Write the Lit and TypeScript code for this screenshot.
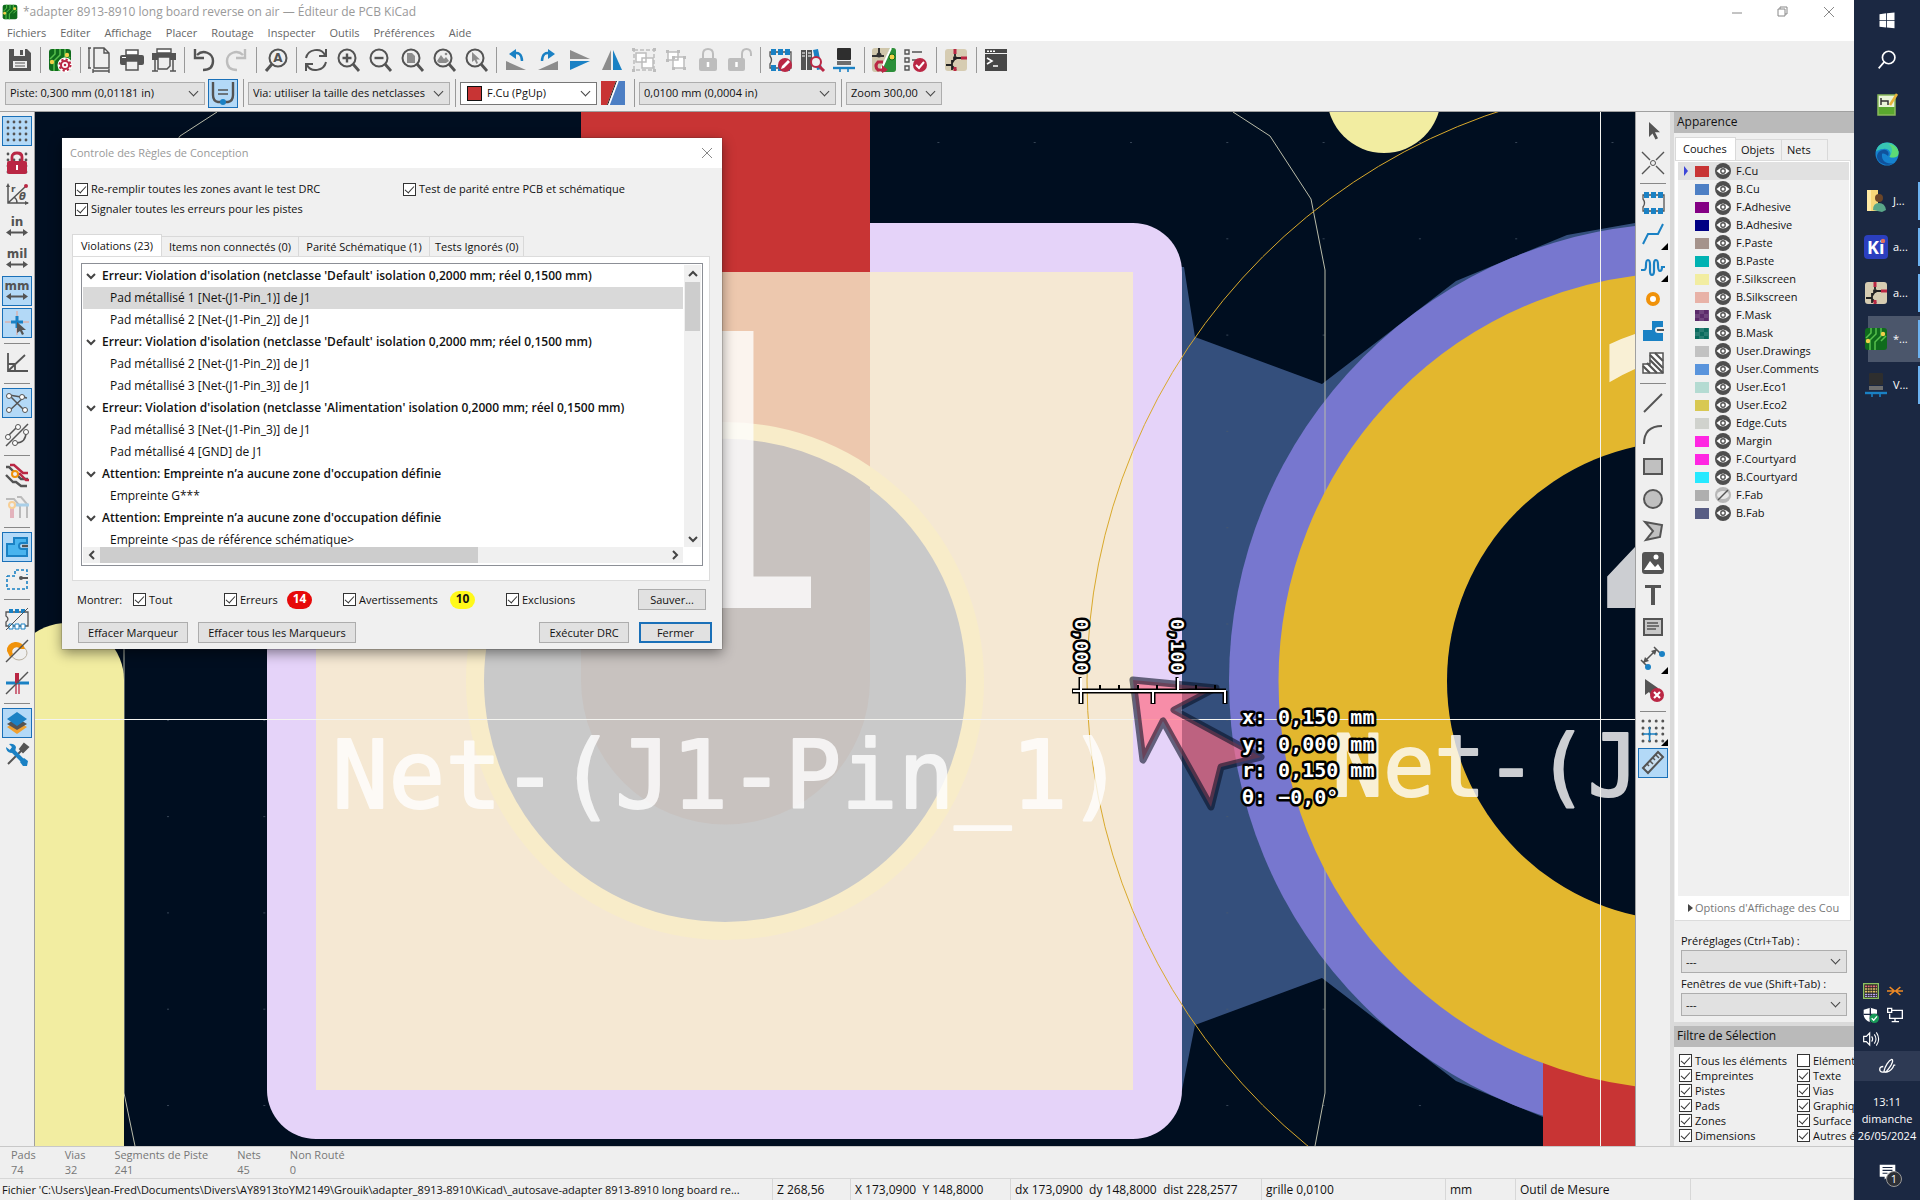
import { LitElement, html, svg, css, nothing } from "lit";
import { customElement, property } from "lit/decorators.js";

const G = "#545454";
const B = "#1a81c4";
const R = "#ba2744";
const L = "#bdbdbd";

const board = svg`<rect x="1" y="1" width="22" height="22" rx="3" fill="#0f6b1c"/><path d="M7 1v5l-5 5M12 1v6l-6 6v10M17 1v8l-6 6v8M22 9l-5 5" fill="none" stroke="#57c04c" stroke-width="1.500"/><circle cx="4" cy="14" r="2.200" fill="#f2d04a"/><circle cx="19" cy="7" r="2.200" fill="#f2d04a"/>`;
const sch = svg`<rect x="1" y="1" width="22" height="22" rx="3" fill="#d6ccb2"/><path d="M11 1v7M11 10h12M2 17h6M8 12v10M8 15l4-6M8 18l4 4" fill="none" stroke="#222" stroke-width="1.800"/><path d="M11 1v5M17 10h6M11 23v-4" stroke="${R}" stroke-width="3"/><circle cx="11" cy="10" r="2" fill="#222"/>`;
const glass = svg`<circle cx="11" cy="10" r="8.500" fill="none" stroke="${G}" stroke-width="2"/><path d="M17 16l6 7" stroke="${G}" stroke-width="2.800"/>`;
const arrow = svg`<path d="M8 3v15l3.500-3.500 3 6 2.500-1.200-3-6h5z" fill="${G}"/>`;
const pads = svg`<path d="M2 4h21v16H2v-4q3-4 0-8z" fill="none" stroke="${G}" stroke-width="1.300"/><path d="M3 1h5v6H3zM10 1h5v6h-5zM17 1h5v6h-5zM3 17h5v6H3zM10 17h5v6h-5zM17 17h5v6h-5z" fill="${B}"/>`;
const dots = (c: string) => svg`<path d="M3 3h18.100M3 9h18.100M3 15h18.100M3 21h18.100" stroke="${c}" stroke-width="2.800" stroke-linecap="round" stroke-dasharray="0 6"/>`;
const units = (t: string) => svg`<text x="12" y="11" text-anchor="middle" font-size="12" font-weight="700" fill="${G}" font-family="DejaVu Sans, sans-serif">${t}</text><path d="M4 17.500h16" stroke="${G}" stroke-width="2"/><path d="M1 17.500l5-3.500v7zM23 17.500l-5-3.500v7z" fill="${G}"/>`;

const icons: Record<string, unknown> = {
  save: svg`<path d="M1 1h18l4 4v18H1z" fill="${G}"/><path d="M6 1h11v7H6z" fill="#efefef"/><path d="M12 2h3v5h-3z" fill="${G}"/><path d="M5 13h14v7H5z" fill="#efefef"/><path d="M7 15h10M7 18h10" stroke="${G}"/>`,
  setup: svg`${board}<circle cx="17" cy="17" r="5.500" fill="none" stroke="#fff" stroke-width="4"/><circle cx="17" cy="17" r="4" fill="#fff" stroke="${R}" stroke-width="2"/><circle cx="17" cy="17" r="5.500" fill="none" stroke="${R}" stroke-width="2" stroke-dasharray="2.200 2.100"/><circle cx="17" cy="17" r="1.300" fill="${R}"/>`,
  page: svg`<path d="M6 0h10l5 5v15H6zM16 0v5h5M5 23h16M5 21v4M21 21v4M1 0v20M0 0h3M0 20h3" fill="none" stroke="${G}" stroke-width="1.400"/>`,
  print: svg`<path d="M6 2h12v5H6z" fill="#fff" stroke="${G}" stroke-width="1.500"/><rect x="0" y="7" width="24" height="10" rx="2" fill="${G}"/><path d="M6 13h12v9H6z" fill="#efefef" stroke="${G}" stroke-width="1.500"/><path d="M2 9.500h4" stroke="#fff"/>`,
  plot: svg`<path d="M5 1h14v4H5z" fill="#fff" stroke="${G}" stroke-width="1.400"/><path d="M0 5h24v7H0z" fill="${G}"/><path d="M6 9h12v9l-3 3H6z" fill="#efefef" stroke="${G}" stroke-width="1.500"/><path d="M3 12v11M21 12v11M0 23h6M18 23h6" fill="none" stroke="${G}" stroke-width="1.500"/>`,
  undo: svg`<path d="M5 7c6-6 16-2 16 6 0 6-4 9-10 9" fill="none" stroke="${G}" stroke-width="2.400"/><path d="M3 1v9h9" fill="none" stroke="${G}" stroke-width="2.400"/>`,
  redo: svg`<path d="M19 7C13 1 3 5 3 13c0 6 4 9 10 9M21 1v9h-9" fill="none" stroke="${L}" stroke-width="2.400"/>`,
  find: svg`<circle cx="14" cy="10" r="8.500" fill="none" stroke="${G}" stroke-width="2"/><path d="M8 16l-6 7" stroke="${G}" stroke-width="3"/><text x="14" y="14" font-size="12" font-weight="700" text-anchor="middle" fill="${G}" font-family="DejaVu Sans, sans-serif">A</text>`,
  refresh: svg`<path d="M2 10C4 1 17-1 21 7M22 1v7h-7M22 14c-2 9-15 11-19 3M2 23v-7h7" fill="none" stroke="${G}" stroke-width="2"/>`,
  zin: svg`${glass}<path d="M6.500 10h9M11 5.500v9" stroke="${G}" stroke-width="2.400"/>`,
  zout: svg`${glass}<path d="M6.500 10h9" stroke="${G}" stroke-width="2.400"/>`,
  zpage: svg`${glass}<path d="M7 5h5l3 3v7H7z" fill="#8d8d8d"/>`,
  zobj: svg`${glass}<path d="M5 13l4-6 3 4 2-2 3 4-3 2H7z" fill="#8d8d8d"/><circle cx="14" cy="6" r="1.300" fill="#8d8d8d"/>`,
  zsel: svg`${glass}<path d="M8 4v10l2.500-2 2 4 1.500-1-1.500-3.500H16z" fill="#8d8d8d"/>`,
  rccw: svg`<path d="M2 13v9h20z" fill="#8c8c8c"/><path d="M8 6c7-3 10 1 10 7" fill="none" stroke="${B}" stroke-width="2.400"/><path d="M12 1L5 6l7 5z" fill="${B}"/>`,
  rcw: svg`<path d="M22 13v9H2z" fill="#8c8c8c"/><path d="M16 6C9 3 6 7 6 13" fill="none" stroke="${B}" stroke-width="2.400"/><path d="M12 1l7 5-7 5z" fill="${B}"/>`,
  flipv: svg`<path d="M2 2l20 9H2z" fill="#8c8c8c"/><path d="M2 13h20L2 22z" fill="${B}"/>`,
  fliph: svg`<path d="M11 2v20H2z" fill="#8c8c8c"/><path d="M13 2v20h9z" fill="${B}"/>`,
  group: svg`<path d="M2 2h20v20H2z" fill="none" stroke="${L}" stroke-width="1.500" stroke-dasharray="4 2"/><path d="M4 5h10v9H4zM10 10h11v10H10z" fill="#fff" stroke="${L}" stroke-width="1.500"/><path d="M0 0h3v3H0zM21 0h3v3h-3zM0 21h3v3H0zM21 21h3v3h-3z" fill="${L}"/>`,
  ungroup: svg`<path d="M4 4h10v8H4zM9 9h11v11H9z" fill="#fff" stroke="${L}" stroke-width="1.500"/><path d="M2 2h3v3H2zM13 2h3v3h-3zM2 11h3v3H2zM8 8h3v3H8zM19 8h3v3h-3zM8 19h3v3H8zM19 19h3v3h-3z" fill="${L}"/>`,
  lock: svg`<rect x="3" y="10" width="18" height="13" rx="2" fill="${L}"/><path d="M7 10V6q0-5 5-5t5 5v4" fill="none" stroke="${L}" stroke-width="2"/><path d="M12 14v5" stroke="#fff" stroke-width="2.500"/>`,
  unlock: svg`<rect x="0" y="10" width="17" height="13" rx="2" fill="${L}"/><path d="M14 10V6q0-5 4.500-5T23 6v2" fill="none" stroke="${L}" stroke-width="2"/><path d="M8.500 14v5" stroke="#fff" stroke-width="2.500"/>`,
  fpedit: svg`${pads}<circle cx="17" cy="17" r="7" fill="${R}"/><path d="M13 21l1-3 6-6 2 2-6 6z" fill="#fff"/>`,
  libs: svg`<path d="M1 2h5v20H1zM7 2h5v20H7z" fill="${G}"/><path d="M2 5h3M8 5h3M2 8h3M8 8h3" stroke="#fff"/><path d="M13 2l5-1 4 20-5 1z" fill="${B}"/><circle cx="16" cy="14" r="5" fill="#efefef" stroke="${R}" stroke-width="2"/><path d="M19 18l5 5" stroke="${R}" stroke-width="3"/>`,
  v3d: svg`<rect x="5" y="0" width="14" height="12" rx="1" fill="#2e2e2e"/><rect x="5" y="13" width="14" height="4" fill="#6e6e6e"/><path d="M1 20h22" stroke="${B}" stroke-width="2.400"/><path d="M8 19v5M16 19v5" stroke="${B}" stroke-width="1.600"/>`,
  update: svg`<rect x="0" y="0" width="24" height="24" rx="3" fill="#cfc6ab"/><path d="M18 0h3q3 0 3 3v18q0 3-3 3H8z" fill="#2b8f3a"/><path d="M19 0L8 24" stroke="#fff" stroke-width="2"/><path d="M7 0v7M0 8h12" stroke="#333" stroke-width="2"/><circle cx="7" cy="7" r="2.500" fill="#333"/><circle cx="20" cy="9" r="3" fill="#f2d04a" stroke="#0f6b1c"/><path d="M11 14H6q-4 4 0 8h8" fill="none" stroke="${R}" stroke-width="3"/><path d="M10 17l6 5-6 3z" fill="${R}"/>`,
  drc: svg`<path d="M1 2h4v4H1zM1 10h4v4H1zM1 18h4v4H1zM8 4h10M8 12h6" fill="none" stroke="${G}" stroke-width="1.400"/><circle cx="16" cy="17" r="7" fill="${R}"/><path d="M12 17l3 3 5-6" fill="none" stroke="#fff" stroke-width="2"/>`,
  sch,
  console: svg`<path d="M1 1h22v22H1z" fill="#474747"/><path d="M1 5.500h22" stroke="#efefef"/><path d="M3 3.200h8" stroke="#fff" stroke-width="1.500" stroke-dasharray="2 1"/><path d="M3 10l5 3-5 3M9 18h5" fill="none" stroke="#fff" stroke-width="1.600"/>`,
  width: svg`<path d="M2 1v13q0 6 5 7h10q5-1 5-7V1" fill="none" stroke="${G}" stroke-width="2.400"/><path d="M7 9h10M7 13h10" stroke="${G}" stroke-width="1.500"/><circle cx="12" cy="21" r="3" fill="${B}"/>`,
  pair: svg`<path d="M0 0h15L6 24H0z" fill="#c83434"/><path d="M17 0h7v24H8z" fill="#4d7fc4"/><path d="M15.500 0L6.500 24" stroke="#222" stroke-width="1"/><path d="M17 0L8 24" stroke="#fff" stroke-width="1.500"/>`,
  grid: dots(G),
  gridlock: svg`${dots(G)}<rect x="2" y="10" width="20" height="13" rx="2" fill="${R}"/><path d="M7 10V6q0-4 5-4t5 4v4" fill="none" stroke="${R}" stroke-width="2.800"/><path d="M12 14v5" stroke="#fff" stroke-width="2"/>`,
  polar: svg`<path d="M3 2v18h20M3 20L20 4M9 14q3 2 3 6" fill="none" stroke="${G}" stroke-width="1.500"/><path d="M3 0l2 4H1zM24 20l-4-2v4z" fill="${G}"/><circle cx="21" cy="3" r="2" fill="${R}"/><text x="6" y="9" font-size="9" font-weight="700" fill="${G}" font-family="DejaVu Sans, sans-serif">r</text><text x="14" y="17" font-size="10" font-weight="700" font-style="italic" fill="${G}" font-family="DejaVu Sans, sans-serif">θ</text>`,
  inch: units("in"),
  mil: units("mil"),
  mm: units("mm"),
  cross: svg`<path d="M0 11h24M12 0v24" stroke="#e8a08c"/><path d="M6 11h12M12 5v12" stroke="${B}" stroke-width="3"/><path d="M12 11v11l3-2 2 4 2-1-2-4h4z" fill="${G}"/>`,
  angle: svg`<path d="M3 2v18h20M3 20L20 4M3 13h7v7" fill="none" stroke="${G}" stroke-width="1.800"/>`,
  rats: svg`<path d="M4 4l16 16M4 20L20 5M4 4l18 3" stroke="${G}" stroke-width="1.500"/><circle cx="4" cy="5" r="2.500" fill="#fff" stroke="${G}"/><circle cx="17" cy="6" r="2.500" fill="#fff" stroke="${G}"/><circle cx="4" cy="19" r="2.500" fill="#fff" stroke="${G}"/><circle cx="20" cy="19" r="2.500" fill="#fff" stroke="${G}"/>`,
  ratsc: svg`<path d="M1 23L23 1M3 13l9-9M11 20q10 0 10-11" fill="none" stroke="${G}" stroke-width="1.500"/><circle cx="3" cy="14" r="2.500" fill="#fff" stroke="${G}"/><circle cx="13" cy="4" r="2.500" fill="#fff" stroke="${G}"/><circle cx="10" cy="20" r="2.500" fill="#fff" stroke="${G}"/><circle cx="21" cy="9" r="2.500" fill="#fff" stroke="${G}"/>`,
  tracks: svg`<path d="M1 4h3l5 5M12 12l4 4h7" fill="none" stroke="${G}" stroke-width="2.400"/><path d="M5 2h4l9 8h5M12 11h3l6 6h3" fill="none" stroke="${R}" stroke-width="2.400"/><path d="M1 12l7 7h3l5 4h6" fill="none" stroke="${G}" stroke-width="2.400"/><circle cx="10" cy="11" r="3" fill="#efefef" stroke="#f0920a" stroke-width="2"/>`,
  tracksl: svg`<path d="M1 4h8l6 7v12M12 2h4l6 7v14" fill="none" stroke="#bbb" stroke-width="2"/><path d="M10 10h14" stroke="#a9cfe8" stroke-width="3"/><path d="M7 12v11" stroke="#e3b3bc" stroke-width="4"/><circle cx="7" cy="10" r="3" fill="#efefef" stroke="#f7cf96" stroke-width="2"/>`,
  zone: svg`<path d="M2 9h7V3h13v5h-5q-3 0-3 3t3 3h5v7H2z" fill="#49b4ee" stroke="${B}" stroke-width="2"/><path d="M17 11h6" stroke="${G}" stroke-width="2.400"/>`,
  zoneo: svg`<path d="M2 9h8V3h12v5M22 14v8H2V9" fill="none" stroke="${B}" stroke-width="1.600" stroke-dasharray="3 2"/><circle cx="16" cy="11" r="2" fill="${G}"/><path d="M17 11h6" stroke="${G}" stroke-width="2"/>`,
  fpo: svg`<path d="M3 5h20v14H1v-4q4-3 0-6V5z" fill="none" stroke="${G}" stroke-width="1.300"/><path d="M4 2h4v4H4zM10 2h4v4h-4zM16 2h4v4h-4z" fill="${B}"/><path d="M4 17h4v5H4zM10 17h4v5h-4zM16 17h4v5h-4z" fill="#fff" stroke="${B}"/><path d="M1 23L23 1" stroke="${G}"/>`,
  viao: svg`<ellipse cx="14" cy="14" rx="8" ry="7" fill="none" stroke="#b9b0a0"/><path d="M2 12a9 8 0 0 1 18-2h-5a4 4 0 0 0-7 5l-3 3z" fill="#f0920a"/><path d="M1 23L23 1" stroke="${G}" stroke-width="1.500"/>`,
  trko: svg`<path d="M1 12h23" stroke="${B}" stroke-width="3"/><path d="M12 2v10" stroke="${R}" stroke-width="4"/><path d="M11 13v10M14 13v10" stroke="${R}" stroke-width="1.300"/><path d="M1 23L23 1" stroke="${G}" stroke-width="1.500"/>`,
  layers: svg`<path d="M12 10l10 6-10 7-10-7z" fill="#f0a030"/><path d="M12 7l10 6-10 6-10-6z" fill="${G}"/><path d="M12 1l10 7-10 7L2 8z" fill="${B}"/>`,
  tools: svg`<path d="M3 21L18 6" stroke="${G}" stroke-width="2"/><path d="M15 6l4-5 4 3-5 5z" fill="${G}" stroke="${G}" stroke-width="2"/><path d="M6 6l13 13" stroke="${B}" stroke-width="4"/><path d="M1 4l4 3 2-3-3-3q5-1 7 3l-1 5-4 1q-5-1-5-6zM15 19l4-4 4 3-1 5h-4z" fill="${B}"/>`,
  arrow,
  hair: svg`<path d="M1 1l8 8M15 15l8 8M1 23l8-8M15 9l8-8" stroke="${G}" stroke-width="1.400"/><circle cx="12" cy="12" r="2.500" fill="none" stroke="${G}"/>`,
  fp: pads,
  route: svg`<path d="M2 21l5-10h10l5-10" fill="none" stroke="${B}" stroke-width="2"/>`,
  tune: svg`<path d="M0 15h3q2 0 2-5t2-5 2 5v6q0 4 2 4t2-4V9q0-4 2-4t2 5q0 6 2 6t2-4h3" fill="none" stroke="${B}" stroke-width="2.200"/>`,
  via: svg`<circle cx="12" cy="12" r="5" fill="#fff" stroke="#f0920a" stroke-width="4"/>`,
  zonef: svg`<path d="M2 11h9V2h11v6h-5a3 3 0 0 0 0 6h5v8H2z" fill="${B}"/><path d="M16 11h7" stroke="${G}" stroke-width="2"/>`,
  hatch: svg`<path d="M9 2h13v20H2V13h7z" fill="#fff" stroke="${G}" stroke-width="1.500"/><path d="M9 4l13 13M14 2l8 8M9 9l13 13M6 12l10 10M2 15l7 7" stroke="${G}" stroke-width="2.200"/>`,
  line: svg`<path d="M3 21L21 3" stroke="${G}" stroke-width="2"/>`,
  arc: svg`<path d="M3 21Q3 3 21 3" fill="none" stroke="${G}" stroke-width="2"/>`,
  rect: svg`<path d="M3 4h18v15H3z" fill="#c0c0c0" stroke="${G}" stroke-width="2"/>`,
  circ: svg`<circle cx="12" cy="12" r="9" fill="#c0c0c0" stroke="${G}" stroke-width="2"/>`,
  poly: svg`<path d="M4 3l17 3-2 12-14 3 7-9z" fill="#c0c0c0" stroke="${G}" stroke-width="2"/>`,
  image: svg`<rect x="1" y="1" width="22" height="22" rx="3" fill="${G}"/><path d="M3 19l6-9 5 6 3-3 4 6z" fill="#fff"/><circle cx="15" cy="6" r="2.500" fill="#fff"/>`,
  text: svg`<path d="M4 2h16v3h-6v17h-4V5H4z" fill="${G}"/>`,
  tbox: svg`<path d="M3 4h18v16H3z" fill="#c8c8c8" stroke="${G}" stroke-width="2"/><path d="M6 8h11M6 11h12M6 14h9" stroke="${G}" stroke-width="1.300"/>`,
  dim: svg`<path d="M3 15L15 3M0 13l6 6M13 0l7 7" stroke="${G}" stroke-width="1.500"/><path d="M2 16l2-6 4 4zM16 2l-6 2 4 4z" fill="${G}"/><circle cx="21" cy="7" r="3" fill="${B}"/><circle cx="7" cy="20" r="3" fill="${B}"/>`,
  del: svg`<path d="M4 0v16l4-3 4 6 5-10z" fill="${G}"/><circle cx="16" cy="16" r="7" fill="${R}"/><path d="M13 13l6 6M19 13l-6 6" stroke="#fff" stroke-width="2.200"/>`,
  origin: svg`<path d="M2 2h20M2 9h20M2 15h20M2 22h20" stroke="${G}" stroke-width="3" stroke-linecap="round" stroke-dasharray="0 6.600"/><path d="M2 15h14M8.600 8v14" stroke="${B}" stroke-width="1.600"/>`,
  ruler: svg`<path d="M2 17L17 1l5 5L7 22z" fill="#c9dff0" stroke="${G}" stroke-width="2"/><path d="M6 13l2 2M9 10l3 3M12 7l2 2M15 4l3 3" stroke="${G}" stroke-width="1.500"/>`,
  win: svg`<path d="M3 5l8-1v8H3zM12 4l9-1v9h-9zM3 13h8v8l-8-1zM12 13h9v9l-9-1z" fill="#fff"/>`,
  search: svg`<circle cx="14" cy="9" r="7.500" fill="none" stroke="#fff" stroke-width="2"/><path d="M9 14l-7 8" stroke="#fff" stroke-width="2"/>`,
  note: svg`<path d="M3 2h17v20H3z" fill="#e9f5d8"/><path d="M3 14h17v8H3z" fill="#5aa82e"/><path d="M3 2h17v20H3z" fill="none" stroke="#89b85c" stroke-width="1.500"/><path d="M6 5v7M6 8h7v4" fill="none" stroke="#333" stroke-width="1.500"/><path d="M15 12l7-11" stroke="#e9b43a" stroke-width="2.500"/>`,
  edge: svg`<circle cx="12" cy="12" r="11.500" fill="#1683cf"/><path d="M1 10C3-3 22-2 23.500 10c0 5-5 6-9 5 3-4-1-9-6-8-4 0-7 2-7.500 3z" fill="#37c6b4"/><path d="M14 2c6 1 10 5 9.500 9 0 5-5 5-9 4 4-6 3-10-1-13z" fill="#5ddb75"/><path d="M7 12c-1 7 5 11 12 9-6 4-16 1-17-6 0-4 3-7 6-7 4-1 7 3 5 6-2-2-5-3-6-2z" fill="#10529c"/>`,
  folder: svg`<path d="M3 1h11v21H3z" fill="#f8d778"/><path d="M3 1h4v21H3z" fill="#ffe9a3"/><circle cx="15" cy="9" r="4" fill="#6b4528"/><path d="M9 21q0-7 6-7t7 7l-4 2z" fill="#5aa789"/>`,
  ki: svg`<rect x="0" y="0" width="24" height="24" rx="4" fill="#2b3fbf"/><text x="3" y="19" font-size="18" font-weight="700" fill="#fff" font-family="Open Sans, sans-serif">Ki</text><circle cx="19" cy="6" r="2.200" fill="#e0705c"/>`,
  pcb: board,
  meter: svg`<rect x="0" y="0" width="24" height="24" fill="#8dc060"/><rect x="2" y="2" width="20" height="20" fill="#222"/><path d="M3 5h18" stroke="#e2707a" stroke-width="2.500" stroke-dasharray="3 1"/><path d="M3 9h18M3 13h18" stroke="#e2c66a" stroke-width="2.500" stroke-dasharray="3 1"/><path d="M3 17h18M3 20h18" stroke="#b9a6f0" stroke-width="2" stroke-dasharray="3 1"/>`,
  orange: svg`<path d="M0 12h10M14 12h10M4 6l7 6-7 6M20 6l-7 6 7 6" fill="none" stroke="#f08a24" stroke-width="2.400"/>`,
  shield: svg`<path d="M11 1l10 3v8q-1 8-10 11Q2 20 1 12V4z" fill="#fff"/><path d="M11 1v22M1 11h20" stroke="#1b2842" stroke-width="2"/><circle cx="17" cy="17" r="7" fill="#189a58"/><path d="M13 17l3 3 5-6" fill="none" stroke="#fff" stroke-width="2"/>`,
  screen: svg`<path d="M6 5h17v12H4v-7M12 17v5M7 22h11M1 2h6v6H1z" fill="none" stroke="#fff" stroke-width="2"/>`,
  sound: svg`<path d="M1 8h4l5-5v18l-5-5H1z" fill="none" stroke="#fff" stroke-width="1.800"/><path d="M13 8q3 4 0 8M17 5q5 7 0 14M20 2q7 10 0 20" fill="none" stroke="#fff" stroke-width="1.600"/>`,
  pen: svg`<path d="M7 19C8 12 14 3 18 2q3 1-1 8-5 8-8 10l-2-1zM6 12q-5 0-5 4t4 4h6q8-3 10-10h2" fill="none" stroke="#fff" stroke-width="1.800"/>`,
  notif: svg`<path d="M1 1h22v17H12l-4 4v-4H1z" fill="#fff"/><path d="M5 5h14M5 9h14M5 13h7" stroke="#1b2842" stroke-width="1.500"/>`,
};

@customElement("kc-icon")
class KcIcon extends LitElement {
  @property() name = "";
  static styles = css`
    :host { display: block; flex: none; width: 24px; height: 24px; }
    .glyph { display: block; width: 100%; height: 100%; overflow: visible; }
  `;
  render() {
    return html`<svg class="glyph" viewBox="0 0 24 24" aria-hidden="true">${icons[this.name]}</svg>`;
  }
}

@customElement("kc-board")
class KcBoard extends LitElement {
  static styles = css`
    :host { display: block; width: 100%; height: 100%; overflow: hidden; }
    .scene { display: block; width: 100%; height: 100%; background: #000e20; }
    .net {
      font-family: "DejaVu Sans Mono", monospace; fill: #fff; opacity: 0.8;
      stroke: #fff; stroke-width: 2px; stroke-linejoin: round;
    }
    .n1 { font-size: 94px; }
    .n2 { font-size: 85px; }
    .num { font-size: 380px; stroke: none; }
    .measure {
      font-family: "DejaVu Sans Mono", monospace; font-weight: 700; fill: #fff;
      stroke: #000; stroke-width: 5px; stroke-linejoin: round; paint-order: stroke;
    }
    .big { font-size: 20px; }
    .small { font-size: 18px; }
  `;
  render() {
    const minor = [1100, 1119, 1138, 1157, 1196, 1215];
    return html`<svg class="scene" viewBox="35 112 1600 1034" preserveAspectRatio="xMinYMin slice">
      <defs>
        <pattern id="dots" x="167" y="142" width="96.300" height="96.300" patternUnits="userSpaceOnUse">
          <rect width="2" height="1" fill="#4c5a6b" fill-opacity="0.7" />
        </pattern>
      </defs>
      <path d="M1170 267L1184 267L1195 337L1322 384L1456 281L1567 235L1640 222V1140L1567 1127L1456 1081L1322 978L1195 1025L1182 1090z" fill="#344f7c" />
      <rect x="35" y="112" width="1600" height="1034" fill="url(#dots)" />
      <circle cx="1384" cy="96" r="57" fill="#f2eda1" />
      <circle cx="1687" cy="681" r="458" fill="#7777cf" />
      <path d="M217 112L180 136L139 199L124 270V1093L135 1146M1233 112L1270 136L1311 199L1325 270V1093L1315 1146" fill="none" stroke="#b9bca9" />
      <rect x="10" y="623" width="114" height="600" rx="57" fill="#f2eda1" />
      <rect x="1543" y="800" width="289" height="400" fill="#c83434" />
      <circle cx="1687" cy="681" r="324" fill="none" stroke="#e3b72e" stroke-width="169" />
      <circle cx="1687" cy="681" r="240" fill="#000e20" />
      <rect x="267" y="223" width="915" height="916" rx="49" fill="#e5d3f9" />
      <rect x="581" y="100" width="289" height="172" fill="#c83434" />
      <rect x="316" y="272" width="817" height="818" fill="#f5e8d3" />
      <path d="M581 272H870V680A144.500 144.500 0 0 1 581 680z" fill="#edc8ae" />
      <circle cx="725" cy="681" r="259" fill="#f8ecc9" />
      <circle cx="725" cy="681" r="241" fill="#c9c9c9" />
      <path d="M581 487A241 241 0 0 1 870 487V680A144.500 144.500 0 0 1 581 680z" fill="#c8c2bf" />
      <circle cx="1687" cy="681" r="600" fill="none" stroke="#d9a92c" />
      <text class="net num" x="608" y="608">1</text>
      <text class="net n1" x="332" y="808">Net-(J1-Pin_1)</text>
      <text class="net num" x="1579" y="608">2</text>
      <text class="net n2" x="1332" y="796">Net-(J1-Pin_2)</text>
      <path d="M35 719.500H1635M1600.500 112V1146" stroke="#f4f4f0" />
      <path d="M1133 680L1216 688L1174 710L1261 757L1221 767L1211 807L1163 721L1143 760z"
        fill="rgb(255 107 130 / 0.68)" stroke="rgb(10 18 38 / 0.6)" stroke-width="7" stroke-linejoin="round" />
      <path d="M1080 692V677M1177 692V677" stroke="#000" stroke-width="3" />
      ${minor.map((x) => svg`<path d="M${x} 692v-7" stroke="#000" stroke-width="2" />`)}
      <path d="M1072 691H1226M1081 691V704M1153 691V704M1225 691V704" stroke="#000" stroke-width="5" fill="none" />
      <path d="M1073 691H1226M1081 678V703M1153 691V703M1225 691V703M1178 678V690" stroke="#fff" stroke-width="2" fill="none" />
      <text class="measure small" transform="translate(1075 619) rotate(90)">0,000</text>
      <text class="measure small" transform="translate(1171 619) rotate(90)">0,100</text>
      <text class="measure big" x="1242" y="724">x: 0,150 mm</text>
      <text class="measure big" x="1242" y="751">y: 0,000 mm</text>
      <text class="measure big" x="1242" y="777">r: 0,150 mm</text>
      <text class="measure big" x="1242" y="804">θ: −0,0°</text>
    </svg>`;
  }
}

const layers: [string, string][] = [
  ["F.Cu", "#c83434"], ["B.Cu", "#4d7fc4"], ["F.Adhesive", "#840084"], ["B.Adhesive", "#000084"],
  ["F.Paste", "#a5938c"], ["B.Paste", "#00b2b2"], ["F.Silkscreen", "#f2eda1"], ["B.Silkscreen", "#e8b2a7"],
  ["F.Mask", "#5c2b6b"], ["B.Mask", "#0b6b5e"], ["User.Drawings", "#c2c2c2"], ["User.Comments", "#5994dc"],
  ["User.Eco1", "#b4dbd2"], ["User.Eco2", "#d8c852"], ["Edge.Cuts", "#d0d2cd"], ["Margin", "#ff26e2"],
  ["F.Courtyard", "#ff26e2"], ["B.Courtyard", "#26e9ff"], ["F.Fab", "#afafaf"], ["B.Fab", "#585d84"],
];

const violations: [string, string[]][] = [
  ["Erreur: Violation d'isolation (netclasse 'Default' isolation 0,2000 mm; réel 0,1500 mm)",
    ["Pad métallisé 1 [Net-(J1-Pin_1)] de J1", "Pad métallisé 2 [Net-(J1-Pin_2)] de J1"]],
  ["Erreur: Violation d'isolation (netclasse 'Default' isolation 0,2000 mm; réel 0,1500 mm)",
    ["Pad métallisé 2 [Net-(J1-Pin_2)] de J1", "Pad métallisé 3 [Net-(J1-Pin_3)] de J1"]],
  ["Erreur: Violation d'isolation (netclasse 'Alimentation' isolation 0,2000 mm; réel 0,1500 mm)",
    ["Pad métallisé 3 [Net-(J1-Pin_3)] de J1", "Pad métallisé 4 [GND] de J1"]],
  ["Attention: Empreinte n’a aucune zone d'occupation définie", ["Empreinte G***"]],
  ["Attention: Empreinte n’a aucune zone d'occupation définie", ["Empreinte <pas de référence schématique>"]],
];

const topTools = ["save", "|", "setup", "|", "page", "print", "plot", "|", "undo", "redo", "|", "find", "|",
  "refresh", "zin", "zout", "zpage", "zobj", "zsel", "|", "rccw", "rcw", "flipv", "fliph", "group", "ungroup",
  "lock", "unlock", "|", "fpedit", "libs", "v3d", "|", "update", "drc", "|", "sch", "|", "console"];
const leftTools = ["grid*", "gridlock", "polar", "inch", "mil", "mm*", "cross*", "|", "angle", "|", "rats*", "ratsc", "|",
  "tracks", "tracksl", "|", "zone*", "zoneo", "|", "fpo", "viao", "trko", "|", "layers*", "tools"];
const rightTools = ["arrow", "hair", "|", "fp", "route+", "tune+", "via", "zonef", "hatch", "|", "line", "arc", "rect",
  "circ", "poly", "image", "text", "tbox", "dim+", "del", "|", "origin+", "ruler*"];

@customElement("app-root")
class AppRoot extends LitElement {
  static styles = css`
    :host {
      display: flex; height: 100vh; overflow: hidden; background: #efefef; color: #111;
      font: 11px/16px "Open Sans", "Noto Sans", sans-serif; white-space: nowrap;
    }
    * { box-sizing: border-box; }
    button, select, input { font: inherit; color: inherit; margin: 0; }
    button { padding: 0; border: 0; background: none; }
    .window { flex: 1; min-width: 0; display: flex; flex-direction: column; }
    .title { display: flex; align-items: center; height: 24px; padding: 0 18px 0 2px; gap: 5px; background: #fff; color: #999; font-size: 12px; }
    .title .name { flex: 1; }
    .title kc-icon { width: 16px; height: 16px; }
    .winctl { display: flex; gap: 32px; }
    .winctl svg, .close svg { display: block; }
    .menu { display: flex; height: 17px; padding: 1px 0 0 7px; gap: 14px; background: #fff; }
    .menu a { color: #666; text-decoration: none; }
    .tools { display: flex; align-items: center; height: 37px; padding-left: 4px; }
    .tool { display: grid; place-items: center; width: 32px; height: 32px; flex: none; }
    .sep { flex: none; width: 8px; height: 26px; display: grid; place-items: center; }
    .sep::before { content: ""; width: 1px; height: 100%; background: #999; }
    .on { background: #b3d9f7; border: 1px solid #1a70b8; }
    .opts { display: flex; align-items: center; height: 34px; padding: 0 0 3px 5px; border-bottom: 1px solid #a0a0a0; }
    .opts .sep { width: 10px; height: 28px; }
    .opts .on { width: 30px; height: 29px; margin-left: 3px; }
    .pick { position: relative; display: block; flex: none; height: 23px; }
    .pick::after {
      content: ""; position: absolute; right: 8px; top: 6px; width: 6px; height: 6px;
      border: solid #444; border-width: 0 1px 1px 0; transform: rotate(45deg); pointer-events: none;
    }
    .pick select {
      appearance: none; display: block; width: 100%; height: 100%; padding: 0 18px 0 4px;
      border: 1px solid #adadad; border-radius: 0; background: #e1e1e1;
    }
    .pick.white select { background: #fff; border-color: #777; padding-left: 26px; }
    .pick.white::before {
      content: ""; position: absolute; left: 7px; top: 4px; width: 13px; height: 13px; background: #c83434; border: 1px solid #111;
    }
    .w1 { width: 200px; } .w2 { width: 202px; } .w3 { width: 137px; } .w4 { width: 197px; } .w5 { width: 96px; }
    .pair { width: 28px; margin-left: 4px; }
    .work { flex: 1; min-height: 0; display: flex; border-bottom: 1px solid #c8c8c8; }
    .rail { flex: none; width: 34px; padding: 3px 2px; display: flex; flex-direction: column; align-items: center; }
    .rail .cell { position: relative; display: grid; place-items: center; width: 30px; height: 30px; margin: 1px 0; flex: none; }
    .rail .more::after {
      content: ""; position: absolute; right: 0; bottom: 0; width: 0; height: 0;
      border-left: 7px solid transparent; border-bottom: 7px solid #000;
    }
    .bar { flex: none; width: 26px; height: 8px; display: grid; place-items: center; }
    .bar::before { content: ""; width: 100%; height: 1px; background: #888; }
    .canvas { position: relative; flex: 1; min-width: 0; border-left: 1px solid #a0a0a0; border-right: 1px solid #a0a0a0; }
    .side { flex: none; width: 184px; border-left: 4px solid #dadada; display: flex; flex-direction: column; overflow: hidden; }
    .head { height: 21px; padding: 2px 3px; background: #bababa; flex: none; margin: 0; font: inherit; font-size: 12px; }
    .tabs { display: flex; align-items: flex-end; }
    .tabs button { height: 21px; border: 1px solid #d9d9d9; border-bottom: 0; margin-left: -1px; background: #f0f0f0; }
    .tabs button.cur { height: 23px; background: #fff; margin-left: 0; }
    .side .tabs { padding: 4px 0 0 1px; }
    .side .tabs button { padding: 0 0 0 5px; width: 47px; text-align: left; }
    .side .tabs button.cur { width: 61px; padding: 0 0 0 7px; }
    .book { flex: 1; min-height: 0; display: flex; flex-direction: column; margin: 0 3px 0 1px; padding: 1px 1px 0 3px; background: #fff; border: 1px solid #dcdcdc; border-left: 0; }
    .layers { flex: 1; background: #f0f0f0; margin: 0; padding: 0; list-style: none; overflow: hidden; }
    .layer { display: flex; align-items: center; height: 18px; padding-left: 5px; }
    .layer.sel { background: #e1e1e1; }
    .mark { width: 12px; height: 10px; }
    .sw { width: 14px; height: 11px; margin-right: 6px; }
    .sw.mix {
      background-image: conic-gradient(rgb(255 255 255 / 0.12) 25%, transparent 0 50%, rgb(255 255 255 / 0.12) 0 75%, transparent 0);
      background-size: 9px 8px;
    }
    .eye { width: 16px; height: 16px; margin-right: 5px; }
    .eye svg, .mark svg { display: block; }
    .more-opts { flex: none; height: 24px; padding: 0 0 0 10px; color: #777; text-align: left; display: flex; align-items: center; gap: 2px; }
    .presets { flex: none; display: flex; flex-direction: column; padding: 12px 7px 3px; border-bottom: 4px solid #dadada; }
    .presets .pick { margin: 1px 0 3px; }
    .filter { flex: none; display: grid; grid-template-columns: 118px auto; height: 99px; padding: 6px 0 0 5px; grid-auto-rows: 15px; }
    .chk { display: flex; align-items: center; gap: 3px; }
    .chk input {
      appearance: none; flex: none; position: relative; width: 13px; height: 13px; border: 1px solid #333; background: #fff;
    }
    .chk input:checked::after {
      content: ""; position: absolute; left: 3px; top: 0; width: 4px; height: 8px;
      border: solid #333; border-width: 0 1px 1px 0; transform: rotate(42deg);
    }
    .info { display: flex; height: 31px; padding: 0 11px; gap: 29px; color: #777; }
    .info dl { margin: 0; line-height: 15px; }
    .info dd { margin: 0; }
    .status { display: flex; height: 22px; border-top: 1px solid #d7d7d7; font-size: 12px; }
    .status span { padding: 3px 4px 0; border-right: 1px solid #d7d7d7; overflow: hidden; white-space: pre; flex: none; }
    .status .file { flex: 1; padding-left: 2px; font-size: 11px; text-overflow: ellipsis; }
    .s1 { width: 78px; } .s2 { width: 160px; } .s3 { width: 251px; } .s4 { width: 184px; } .s5 { width: 70px; } .s6 { width: 175px; } .s7 { width: 163px; }

    .dialog {
      position: absolute; left: 27px; top: 26px; width: 660px; background: #f0f0f0; display: flex; flex-direction: column;
      box-shadow: 0 4px 12px rgb(0 0 0 / 0.45), 0 0 1px #333;
    }
    .dtitle { display: flex; justify-content: space-between; align-items: center; height: 30px; padding: 0 9px 0 8px; background: #fff; color: #999; }
    .dopts { display: grid; grid-template-columns: 328px auto; grid-auto-rows: 20px; padding: 11px 13px 15px; }
    .dtabs { padding-left: 10px; }
    .dtabs button { padding: 0 5px; flex: none; }
    .t0 { width: 90px; } .t1 { width: 138px; } .t2 { width: 132px; } .t3 { width: 95px; }
    .sheet { margin: -1px 12px 0 10px; padding: 6px 6px 14px 8px; border: 1px solid #dcdcdc; background: #fff; }
    .list { border: 1px solid #8c8f96; display: grid; grid-template-columns: 1fr 18px; grid-template-rows: 282px 17px; padding: 1px; }
    .rows { overflow: hidden; font-size: 12px; }
    .row { display: flex; align-items: center; height: 22px; padding-left: 27px; }
    .row.group { font-weight: 600; padding-left: 3px; gap: 6px; }
    .row.sel { background: #d9d9d9; }
    .vbar { display: flex; flex-direction: column; align-items: center; background: #f0f0f0; margin-left: 1px; }
    .vthumb { width: 15px; height: 49px; background: #cdcdcd; margin-bottom: auto; }
    .hbar { display: flex; align-items: center; background: #f0f0f0; height: 16px; }
    .hthumb { width: 378px; height: 16px; background: #cdcdcd; margin-right: auto; }
    .arr { width: 17px; height: 17px; display: grid; place-items: center; flex: none; }
    .show { display: flex; align-items: center; padding: 8px 16px 0 15px; height: 29px; }
    .show .lab { width: 56px; }
    .badge { border-radius: 9px; height: 18px; width: 25px; text-align: center; font-weight: 700; font-size: 12px; }
    .red { background: #e60a0a; color: #fff; }
    .yel { background: #fff91a; }
    .c0 { width: 91px; } .c1 { width: 63px; } .c2 { width: 107px; } .c3 { flex: 1; }
    .gap { width: 31px; }
    .btn { height: 21px; border: 1px solid #adadad; background: #e1e1e1; }
    .btn.def { border: 2px solid #1a70b8; }
    .actions { display: flex; padding: 12px 10px 6px 16px; gap: 10px; }
    .grow { flex: 1; }
    .b0 { width: 68px; } .b1 { width: 110px; } .b2 { width: 158px; } .b3 { width: 90px; } .b4 { width: 73px; }

    .dock { flex: none; width: 66px; background: #1b2842; color: #fff; display: flex; flex-direction: column; }
    .dock .app { display: flex; align-items: center; justify-content: center; height: 49px; flex: none; }
    .dock .app.short { height: 40px; }
    .dock .app.short kc-icon { width: 20px; height: 20px; }
    .dock .task { display: flex; align-items: center; height: 46px; padding: 0 0 0 10px; gap: 5px; flex: none; }
    .dock .task::after { content: ""; margin-left: auto; width: 2px; height: 38px; background: #6cb2f0; }
    .dock .task.cur { background: linear-gradient(90deg, transparent 14px, #4b566b 14px); }
    .dock .fill { flex: 1; }
    .tray { display: grid; grid-template-columns: 16px 16px; gap: 8px; padding: 0 9px 4px; }
    .tray kc-icon { width: 16px; height: 16px; }
    .ink { height: 30px; display: grid; place-items: center; background: #2e3a54; }
    .ink kc-icon { width: 17px; height: 17px; }
    .clock { text-align: center; line-height: 17px; padding: 12px 0 20px; }
    .notif { position: relative; height: 36px; padding-left: 25px; }
    .notif kc-icon { width: 17px; height: 17px; }
    .count {
      position: absolute; left: 32px; top: 7px; width: 16px; height: 16px; border-radius: 8px; line-height: 14px;
      background: #2c2f36; border: 1px solid #999; text-align: center;
    }
  `;

  private chk(label: string, on = true, cls = "") {
    return html`<label class="chk ${cls}"><input type="checkbox" .checked=${on} />${label}</label>`;
  }

  private pick(label: string, text: string, cls = "") {
    return html`<span class="pick ${cls}"><select aria-label=${label}><option>${text}</option></select></span>`;
  }

  private rail(items: string[]) {
    return html`<div class="rail">${items.map((t) => {
      if (t === "|") return html`<div class="bar"></div>`;
      const name = t.replace(/[*+]/, "");
      return html`<button class="cell ${t.endsWith("*") ? "on" : ""} ${t.endsWith("+") ? "more" : ""}" aria-label=${name}><kc-icon name=${name}></kc-icon></button>`;
    })}</div>`;
  }

  private chevron(d: string) {
    return html`<svg width="10" height="10" viewBox="0 0 10 10"><path d=${d} fill="none" stroke="#444" stroke-width="2" /></svg>`;
  }

  private dialog() {
    return html`<section class="dialog" role="dialog" aria-label="Controle des Règles de Conception">
      <div class="dtitle"><span>Controle des Règles de Conception</span>
        <button class="close" aria-label="Fermer la boîte"><svg width="12" height="12"><path d="M1 1l10 10M11 1L1 11" stroke="#888" /></svg></button></div>
      <div class="dopts">
        ${this.chk("Re-remplir toutes les zones avant le test DRC")}
        ${this.chk("Test de parité entre PCB et schématique")}
        ${this.chk("Signaler toutes les erreurs pour les pistes")}
      </div>
      <div class="tabs dtabs" role="tablist">
        <button class="cur t0" role="tab">Violations (23)</button>
        <button class="t1" role="tab">Items non connectés (0)</button>
        <button class="t2" role="tab">Parité Schématique (1)</button>
        <button class="t3" role="tab">Tests Ignorés (0)</button>
      </div>
      <div class="sheet"><div class="list">
        <div class="rows">${violations.map(([head, subs], g) => html`
          <div class="row group">${this.chevron("M1 3l4 4 4-4")}${head}</div>
          ${subs.map((s, i) => html`<div class="row ${g === 0 && i === 0 ? "sel" : ""}">${s}</div>`)}`)}
        </div>
        <div class="vbar"><span class="arr">${this.chevron("M1 7l4-4 4 4")}</span><span class="vthumb"></span><span class="arr">${this.chevron("M1 3l4 4 4-4")}</span></div>
        <div class="hbar"><span class="arr">${this.chevron("M7 1L3 5l4 4")}</span><span class="hthumb"></span><span class="arr">${this.chevron("M3 1l4 4-4 4")}</span></div>
      </div></div>
      <div class="show">
        <span class="lab">Montrer:</span>
        ${this.chk("Tout", true, "c0")}
        ${this.chk("Erreurs", true, "c1")}<span class="badge red">14</span><span class="gap"></span>
        ${this.chk("Avertissements", true, "c2")}<span class="badge yel">10</span><span class="gap"></span>
        ${this.chk("Exclusions", true, "c3")}
        <button class="btn b0">Sauver...</button>
      </div>
      <div class="actions">
        <button class="btn b1">Effacer Marqueur</button><button class="btn b2">Effacer tous les Marqueurs</button>
        <span class="grow"></span>
        <button class="btn b3">Exécuter DRC</button><button class="btn def b4">Fermer</button>
      </div>
    </section>`;
  }

  private eye(off: boolean) {
    return off
      ? svg`<circle cx="8" cy="8" r="8" fill="#b8b8b8"/><ellipse cx="8" cy="8" rx="6" ry="4" fill="#e8e8e8"/><path d="M3 13L13 3" stroke="#555" stroke-width="1.500"/>`
      : svg`<circle cx="8" cy="8" r="8" fill="#4e4e4e"/><path d="M1.500 8Q8 1 14.500 8 8 15 1.500 8z" fill="#fff"/><circle cx="8" cy="8" r="2.200" fill="#fff" stroke="#555" stroke-width="1.400"/>`;
  }

  private side() {
    const filters = [["Tous les éléments", "Eléments verrouillés"], ["Empreintes", "Texte"], ["Pistes", "Vias"],
      ["Pads", "Graphiques"], ["Zones", "Surface des règles"], ["Dimensions", "Autres éléments"]];
    return html`<aside class="side">
      <h2 class="head">Apparence</h2>
      <div class="tabs"><button class="cur">Couches</button><button>Objets</button><button>Nets</button></div>
      <div class="book">
        <ul class="layers">${layers.map(([name, color], i) => html`<li class="layer ${i === 0 ? "sel" : ""}">
          <span class="mark">${i === 0 ? html`<svg width="6" height="10"><path d="M1 0l4 5-4 5z" fill="#3c46d8" /></svg>` : nothing}</span>
          <span class="sw ${name.endsWith("Mask") ? "mix" : ""}" style="background-color:${color}"></span>
          <span class="eye"><svg width="16" height="16">${this.eye(name === "F.Fab")}</svg></span>${name}</li>`)}
        </ul>
        <button class="more-opts"><svg width="5" height="8"><path d="M0 0l5 4-5 4z" fill="#444" /></svg>Options d'Affichage des Cou</button>
      </div>
      <div class="presets">
        <span>Préréglages (Ctrl+Tab) :</span>${this.pick("Préréglages", "---")}
        <span>Fenêtres de vue (Shift+Tab) :</span>${this.pick("Fenêtres de vue", "---")}
      </div>
      <h2 class="head">Filtre de Sélection</h2>
      <div class="filter">${filters.map(([a, b], i) => [this.chk(a), this.chk(b, i !== 0)])}</div>
    </aside>`;
  }

  render() {
    const menus = ["Fichiers", "Editer", "Affichage", "Placer", "Routage", "Inspecter", "Outils", "Préférences", "Aide"];
    const info = [["Pads", "74"], ["Vias", "32"], ["Segments de Piste", "241"], ["Nets", "45"], ["Non Routé", "0"]];
    const tasks = [["folder", "J..."], ["ki", "a..."], ["sch", "a..."], ["pcb", "*..."], ["v3d", "V..."]];
    return html`
      <main class="window">
        <header class="title"><kc-icon name="pcb"></kc-icon><span class="name">*adapter 8913-8910 long board reverse on air — Éditeur de PCB KiCad</span>
          <span class="winctl">
            <svg width="14" height="12"><path d="M2 7h10" stroke="#888" /></svg>
            <svg width="14" height="12"><path d="M2 3h7v7H2zM4 3V1h7v7H9" fill="none" stroke="#888" /></svg>
            <svg width="14" height="12"><path d="M2 1l10 10M12 1L2 11" stroke="#888" /></svg>
          </span></header>
        <nav class="menu">${menus.map((m) => html`<a href="#">${m}</a>`)}</nav>
        <div class="tools">${topTools.map((t) => t === "|" ? html`<span class="sep"></span>`
          : html`<button class="tool" aria-label=${t}><kc-icon name=${t}></kc-icon></button>`)}</div>
        <div class="opts">
          ${this.pick("Piste", "Piste: 0,300 mm (0,01181 in)", "w1")}
          <button class="tool on" aria-label="Largeur automatique"><kc-icon name="width"></kc-icon></button><span class="sep"></span>
          ${this.pick("Via", "Via: utiliser la taille des netclasses", "w2")}<span class="sep"></span>
          ${this.pick("Couche", "F.Cu (PgUp)", "w3 white")}
          <button class="pair" aria-label="Paire de couches"><kc-icon name="pair"></kc-icon></button>
          <span class="sep"></span>
          ${this.pick("Grille", "0,0100 mm (0,0004 in)", "w4")}<span class="sep"></span>
          ${this.pick("Zoom", "Zoom 300,00", "w5")}
        </div>
        <div class="work">
          ${this.rail(leftTools)}
          <div class="canvas"><kc-board></kc-board>${this.dialog()}</div>
          ${this.rail(rightTools)}
          ${this.side()}
        </div>
        <div class="info">${info.map(([k, v]) => html`<dl><dt>${k}</dt><dd>${v}</dd></dl>`)}</div>
        <footer class="status">
          <span class="file">Fichier 'C:\\Users\\Jean-Fred\\Documents\\Divers\\AY8913toYM2149\\Grouik\\adapter_8913-8910\\Kicad\\_autosave-adapter 8913-8910 long board re...</span>
          <span class="s1">Z 268,56</span><span class="s2">X 173,0900  Y 148,8000</span>
          <span class="s3">dx 173,0900  dy 148,8000  dist 228,2577</span><span class="s4">grille 0,0100</span>
          <span class="s5">mm</span><span class="s6">Outil de Mesure</span><span class="s7"></span>
        </footer>
      </main>
      <aside class="dock">
        <button class="app short" aria-label="Démarrer"><kc-icon name="win"></kc-icon></button>
        <button class="app short" aria-label="Rechercher"><kc-icon name="search"></kc-icon></button>
        <button class="app" aria-label="Notes"><kc-icon name="note"></kc-icon></button>
        <button class="app" aria-label="Navigateur"><kc-icon name="edge"></kc-icon></button>
        ${tasks.map(([i, t]) => html`<button class="task ${i === "pcb" ? "cur" : ""}"><kc-icon name=${i}></kc-icon>${t}</button>`)}
        <div class="fill"></div>
        <div class="tray">${["meter", "orange", "shield", "screen", "sound"].map((n) => html`<kc-icon name=${n}></kc-icon>`)}</div>
        <div class="ink"><kc-icon name="pen"></kc-icon></div>
        <div class="clock">13:11<br />dimanche<br />26/05/2024</div>
        <div class="notif"><kc-icon name="notif"></kc-icon><span class="count">1</span></div>
      </aside>`;
  }
}
